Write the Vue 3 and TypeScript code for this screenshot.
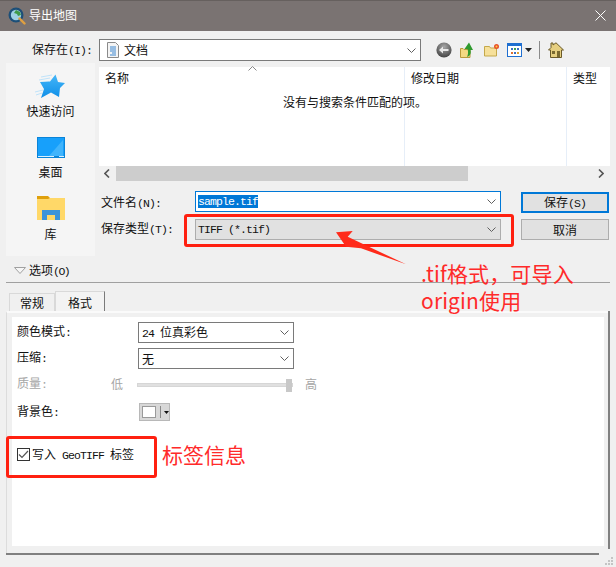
<script setup lang="ts">
const columns: { label: string; width: number }[] = [
  { label: '名称', width: 306 },
  { label: '修改日期', width: 162 },
  { label: '类型', width: 43 },
]
</script>

<template>
  <div class="dialog">
    <header class="titlebar">
      <svg class="app-icon" width="18" height="18" viewBox="0 0 18 18">
        <circle cx="8" cy="8" r="7.500" fill="#1d4f78" />
        <circle cx="8" cy="8" r="5.200" fill="#9fd0e4" />
        <path d="M8 3l4 2 1 3-3 1-1-2-3-1z" fill="#3f9a4a" />
        <path d="M11.500 11.500l5 5" stroke="#e0a040" stroke-width="2.400" stroke-linecap="round" />
      </svg>
      <span class="title">导出地图</span>
      <svg class="close" width="11" height="11" viewBox="0 0 11 11">
        <path d="M.5.5l10 10M10.500.5l-10 10" stroke="#fff" stroke-width="1" />
      </svg>
    </header>

    <div class="lookin">
      <label class="lookin-label">保存在<span class="m">(I):</span></label>
      <div class="combo lookin-combo">
        <svg width="12" height="16" viewBox="0 0 12 16">
          <path d="M.5.5h8l3 3v12H.5z" fill="#f4f4f4" stroke="#8a8a8a" />
          <path d="M3 5h6M3 7h6M3 9h6M5 11h4M3 13h6" stroke="#3a86d0" stroke-width="1" />
        </svg>
        <span>文档</span>
        <svg class="chev" width="9" height="5" viewBox="0 0 9 5"><path d="M.5.5l4 4 4-4" fill="none" stroke="#606060" /></svg>
      </div>
      <div class="toolbar">
        <svg width="16" height="16" viewBox="0 0 16 16">
          <defs>
            <radialGradient id="bk" cx="50%" cy="30%" r="75%"><stop offset="0" stop-color="#a8a8a8" /><stop offset="1" stop-color="#3c3c3c" /></radialGradient>
          </defs>
          <circle cx="8" cy="8" r="7.600" fill="url(#bk)" />
          <path d="M3 8l4-3.500V7h5.500v2H7v2.500z" fill="#e8e8e8" />
        </svg>
        <svg class="gap-up" width="14" height="16" viewBox="0 0 14 16">
          <path d="M.5 6.500h2.500l1 1h6v8h-9.500z" fill="#f3d982" stroke="#b89a3c" />
          <path d="M7 15c3-1 4.500-3.500 3.500-7H13L9 .5 4.500 7H7.500c1 3 .5 6-.5 8z" fill="#2f9a2e" />
        </svg>
        <svg class="gap-new" width="16" height="14" viewBox="0 0 16 14">
          <path d="M.5 3.500h5l1 1.500h6v8h-12z" fill="#f6e09a" stroke="#c4a84a" />
          <circle cx="12.500" cy="3.500" r="2.500" fill="#e8502a" />
          <circle cx="12.500" cy="3.500" r="1" fill="#fbd04a" />
        </svg>
        <svg class="gap-view" width="15" height="14" viewBox="0 0 15 14">
          <rect x=".5" y=".5" width="14" height="13" fill="#fff" stroke="#1f6fd0" />
          <rect x="1" y="1" width="13" height="2" fill="#1f6fd0" />
          <path d="M4 5h2v2H4z" fill="#3a6fc0" /><path d="M7 5h2v2H7z" fill="#3aa050" /><path d="M10 5h2v2h-2z" fill="#3a6fc0" />
          <path d="M4 9h2v2H4z" fill="#e07030" /><path d="M7 9h2v2H7z" fill="#3a6fc0" /><path d="M10 9h2v2h-2z" fill="#e0a030" />
        </svg>
        <svg class="gap-caret" width="7" height="4" viewBox="0 0 7 4"><path d="M0 0h7L3.500 4z" fill="#222" /></svg>
        <i class="tool-sep"></i>
        <svg class="gap-home" width="16" height="16" viewBox="0 0 16 16">
          <path d="M3 1h2v2L8 .8 15.500 8H13.500v7.500h-11V8H.5L3 5.500z" fill="#e6cf80" stroke="#6a5a28" />
          <rect x="4" y="9" width="3" height="3" fill="#7a6a30" /><rect x="9" y="9" width="3" height="6" fill="#7a6a30" />
        </svg>
      </div>
    </div>

    <div class="main">
      <aside class="places">
        <div class="place place-star">
          <svg width="30" height="26" viewBox="0 0 30 26">
            <defs><linearGradient id="st" x1="0" y1="0" x2="0" y2="1"><stop offset="0" stop-color="#45b6f8" /><stop offset="1" stop-color="#0f8fe8" /></linearGradient></defs>
            <path d="M6 4L17 2M4 7l11-2M6 10l8-1M0 19l8-2M1 22l6-2" stroke="#bfe3fa" stroke-width="1" />
            <path d="M20.500 1.500L23 9l7 1-5 5-1 9-8-4.500L6 25l3-9-4-7 10-.5z" fill="url(#st)" />
          </svg>
          <span>快速访问</span>
        </div>
        <div class="place place-desk">
          <svg width="28" height="21" viewBox="0 0 28 21">
            <rect width="28" height="21" fill="#0a84d8" />
            <rect x="1" y="1" width="26" height="18" fill="#17a0fb" />
            <path d="M12 19L26 3v16z" fill="#40b4fc" />
            <path d="M1 19.500h16M22 19.500h5" stroke="#d8f0ff" stroke-width="1" />
          </svg>
          <span>桌面</span>
        </div>
        <div class="place place-lib">
          <svg width="28" height="24" viewBox="0 0 28 24">
            <path d="M0 0h11l2 2v3H0z" fill="#dfa00c" />
            <path d="M0 3h11l2-1h15v22H0z" fill="#ffd868" />
            <path d="M5 24v-10h18v10h-5v-5h-8v5z" fill="#3c94d8" />
          </svg>
          <span>库</span>
        </div>
      </aside>

      <div class="file-pane">
        <div class="list">
          <div class="list-head">
            <div v-for="c in columns" :key="c.label" class="col" :style="{ width: c.width + 'px' }">{{ c.label }}</div>
          </div>
          <svg class="sort" width="9" height="5" viewBox="0 0 9 5"><path d="M.5 4.500l4-4 4 4" fill="none" stroke="#888" /></svg>
          <div class="empty">没有与搜索条件匹配的项。</div>
        </div>
        <div class="hscroll">
          <svg class="arrow" width="6" height="9" viewBox="0 0 6 9"><path d="M5 .5l-4 4 4 4" fill="none" stroke="#555" stroke-width="1.600" /></svg>
          <div class="thumb"></div>
          <svg class="arrow" width="6" height="9" viewBox="0 0 6 9"><path d="M1 .5l4 4-4 4" fill="none" stroke="#555" stroke-width="1.600" /></svg>
        </div>
        <div class="fields">
          <div class="field-labels">
            <label>文件名<span class="m">(N):</span></label>
            <label>保存类型<span class="m">(T):</span></label>
          </div>
          <div class="field-inputs">
            <div class="combo input-active">
              <span class="m selected">sample.tif</span>
              <svg class="chev" width="9" height="5" viewBox="0 0 9 5"><path d="M.5.5l4 4 4-4" fill="none" stroke="#606060" /></svg>
            </div>
            <div class="combo input-gray">
              <span class="m">TIFF (*.tif)</span>
              <svg class="chev" width="9" height="5" viewBox="0 0 9 5"><path d="M.5.5l4 4 4-4" fill="none" stroke="#606060" /></svg>
            </div>
          </div>
          <div class="field-buttons">
            <button class="btn btn-default">保存<span class="m">(S)</span></button>
            <button class="btn">取消</button>
          </div>
        </div>
      </div>
    </div>

    <div class="options">
      <svg width="12" height="7" viewBox="0 0 12 7"><path d="M.5.5h11L6 6.500z" fill="#f6f6f6" stroke="#a0a0a0" /></svg>
      <span>选项<span class="m tight">(O)</span></span>
    </div>

    <div class="tabs">
      <div class="tab">常规</div>
      <div class="tab tab-active">格式</div>
    </div>

    <section class="panel">
      <div class="panel-inner">
        <div class="form-row">
          <label class="form-label">颜色模式<span class="m">:</span></label>
          <div class="combo small"><span><span class="m">24 </span>位真彩色</span>
            <svg class="chev" width="9" height="5" viewBox="0 0 9 5"><path d="M.5.5l4 4 4-4" fill="none" stroke="#606060" /></svg>
          </div>
        </div>
        <div class="form-row">
          <label class="form-label">压缩<span class="m">:</span></label>
          <div class="combo small"><span>无</span>
            <svg class="chev" width="9" height="5" viewBox="0 0 9 5"><path d="M.5.5l4 4 4-4" fill="none" stroke="#606060" /></svg>
          </div>
        </div>
        <div class="form-row quality">
          <label class="form-label">质量<span class="m">:</span></label>
          <span class="low">低</span>
          <div class="slider"><i class="slider-thumb"></i></div>
          <span class="high">高</span>
        </div>
        <div class="form-row bg-row">
          <label class="form-label">背景色<span class="m">:</span></label>
          <div class="color-btn">
            <i class="swatch"></i><i class="color-sep"></i>
            <svg width="5" height="3" viewBox="0 0 5 3"><path d="M0 0h5L2.500 3z" fill="#111" /></svg>
          </div>
        </div>
        <div class="check-row">
          <div class="check-box">
            <span class="checkbox">
              <svg width="11" height="9" viewBox="0 0 11 9"><path d="M1 4.500l3 3 6-6.500" fill="none" stroke="#555" stroke-width="1.200" /></svg>
            </span>
            <span>写入<span class="m"> GeoTIFF </span>标签</span>
          </div>
          <span class="note note-tag">标签信息</span>
        </div>
      </div>
    </section>

    <!-- annotations and window chrome drawn over the dialog -->
    <i class="mark mark-type"></i>
    <svg class="mark-arrow" width="80" height="40" viewBox="0 0 80 40">
      <path d="M0 2.300L16.700 1 11.700 6.700 70 34.300 25 18.300 10 16.700z" fill="#ff2a1a" />
    </svg>
    <div class="note note-tif">.tif格式，可导入<br />origin使用</div>
    <svg class="grip" width="8" height="8" viewBox="0 0 8 8">
      <path d="M6 0h2v2H6zM3 3h2v2H3zM6 3h2v2H6zM0 6h2v2H0zM3 6h2v2H3zM6 6h2v2H6z" fill="#c4c4c4" />
    </svg>
  </div>
</template>

<style>
html, body { margin: 0; padding: 0; }
</style>

<style scoped>
.dialog {
  position: relative;
  width: 616px;
  height: 567px;
  overflow: hidden;
  background: #f0f0f0;
  display: flex;
  flex-direction: column;
  font: 12px/16px "Noto Sans CJK SC", sans-serif;
  color: #111;
}
.m {
  font-family: "Liberation Mono", monospace;
  font-size: 11.5px;
  letter-spacing: -0.9px;
}
.tight { letter-spacing: -1.5px; }
.titlebar {
  height: 31px;
  flex: none;
  box-sizing: border-box;
  border-top: 1px solid #66605e;
  background: #7a7372;
  display: flex;
  align-items: center;
  padding: 0 10px 0 8px;
  color: #fff;
}
.app-icon { margin-top: -1px; }
.title { margin-left: 3px; margin-top: -3px; font-size: 12px; }
.close { margin-left: auto; margin-top: -2px; margin-right: 0; }

.lookin {
  display: flex;
  align-items: center;
  height: 22px;
  margin-top: 8px;
  flex: none;
}
.lookin-label { width: 99px; text-align: right; padding-right: 7px; box-sizing: border-box; margin-top: -1px; }
.combo {
  box-sizing: border-box;
  display: flex;
  align-items: center;
  background: #fff;
  border: 1px solid #7a7a7a;
  height: 22px;
  padding-left: 2px;
}
.chev { margin-left: auto; margin-right: 4px; flex: none; }
.lookin-combo { width: 322px; padding-left: 7px; gap: 5px; font-size: 12px; }
.toolbar { display: flex; align-items: center; margin-left: 15px; }
.gap-up { margin-left: 8px; }
.gap-new { margin-left: 10px; }
.gap-view { margin-left: 7px; }
.gap-caret { margin-left: 3px; }
.tool-sep { width: 1px; height: 18px; background: #8a8a8a; margin-left: 7px; }
.gap-home { margin-left: 8px; }

.main { display: flex; align-items: flex-start; flex: none; margin-top: 2px; padding-left: 6px; }
.places {
  width: 89px;
  height: 193px;
  background: #f5f5f5;
  display: flex;
  flex-direction: column;
  align-items: center;
  flex: none;
}
.place { display: flex; flex-direction: column; align-items: center; }
.place-star { margin-top: 10px; gap: 4px; }
.place-desk { margin-top: 18px; gap: 6px; }
.place-lib { margin-top: 16px; gap: 6px; }
.file-pane { margin-left: 4px; width: 511px; padding-top: 4px; }
.list { position: relative; height: 99px; background: #fff; }
.list-head { display: flex; height: 99px; }
.col {
  box-sizing: border-box;
  padding: 3px 0 0 6px;
  border-right: 1px solid #e6eef8;
}
.col:last-child { border-right: none; }
.sort { position: absolute; left: 149px; top: -1px; }
.empty { position: absolute; left: 184px; top: 27px; }
.hscroll { height: 15px; display: flex; align-items: center; }
.arrow { flex: none; margin: 0 6px 0 5px; }
.thumb { height: 15px; width: 352px; background: #cdcdcd; margin-right: auto; }

.fields { display: flex; margin-top: 10px; }
.field-labels {
  width: 96px;
  display: flex;
  flex-direction: column;
  padding-left: 2px;
  box-sizing: border-box;
  gap: 10px;
  padding-top: 3px;
}
.field-labels label { height: 16px; }
.field-inputs { width: 306px; display: flex; flex-direction: column; gap: 7px; }
.input-active { border-color: #0078d7; height: 21px; }
.input-gray { background: #e1e1e1; border-color: #adadad; height: 21px; }
.selected { background: #0078d7; color: #fff; height: 13px; line-height: 13px; }
.field-buttons { margin-left: 20px; display: flex; flex-direction: column; gap: 6px; padding-top: 1px; }
.btn {
  box-sizing: border-box;
  width: 88px;
  height: 21px;
  padding: 0;
  background: #e1e1e1;
  border: 1px solid #adadad;
  font: inherit;
  color: #111;
}
.btn-default { border: 2px solid #0078d7; }

.options {
  box-sizing: border-box;
  flex: none;
  margin: 6px 6px 0;
  height: 21px;
  border-bottom: 1px solid #a0a0a0;
  display: flex;
  align-items: flex-start;
  gap: 3px;
  padding-left: 8px;
}
.options svg { margin-top: 5px; }

.tabs { display: flex; align-items: flex-end; height: 20px; margin-top: 8px; padding-left: 9px; flex: none; }
.tab {
  box-sizing: border-box;
  width: 46px;
  height: 18px;
  text-align: center;
  border: 1px solid #d9d9d9;
  border-bottom: none;
  line-height: 18px;
  background: #f0f0f0;
}
.tab-active {
  width: 50px;
  height: 20px;
  line-height: 22px;
  background: #f3f3f3;
  border-right: 1px solid #7a7a7a;
}
.panel {
  position: relative;
  box-sizing: border-box;
  flex: none;
  width: 604px;
  height: 244px;
  margin-left: 6px;
  background: #f0f0f0;
  border-top: 2px solid #fafafa;
  border-left: 1px solid #dcdcdc;
  padding: 4px 6px 9px 5px;
}
.panel::before {
  content: "";
  position: absolute;
  right: 0;
  top: -2px;
  width: 2px;
  height: 238px;
  background: #808080;
}
.panel::after {
  content: "";
  position: absolute;
  left: -1px;
  bottom: 0;
  width: 593px;
  height: 2px;
  background: #808080;
}
.panel-inner { background: #fff; height: 100%; padding: 5px 0 0 5px; box-sizing: border-box; }
.form-row { display: flex; align-items: center; height: 21px; margin-bottom: 5px; }
.form-label { width: 121px; flex: none; margin-top: -2px; }
.small { width: 156px; height: 21px; padding-left: 3px; }
.quality { color: #a6a6a6; height: 13px; margin-top: 9px; margin-bottom: 0; }
.quality .form-label { width: 94px; }
.low { width: 26px; margin-top: -2px; }
.slider { width: 156px; height: 4px; background: #e0e0e0; border: 1px solid #d6d6d6; box-sizing: border-box; position: relative; }
.slider-thumb { position: absolute; right: 0; top: -5px; width: 6px; height: 13px; background: #c8c8c8; }
.high { margin-left: 12px; margin-top: -2px; }
.bg-row { margin-top: 12px; height: 18px; margin-bottom: 0; }
.bg-row .form-label { margin-top: 0; }
.color-btn {
  box-sizing: border-box;
  width: 31px;
  height: 18px;
  background: #d8d8d8;
  border: 1px solid #b8b8b8;
  margin-left: 1px;
  display: flex;
  align-items: center;
  padding-left: 2px;
}
.swatch { width: 14px; height: 12px; background: #fff; border: 1px solid #9a9a9a; box-sizing: border-box; }
.color-sep { width: 1px; height: 12px; background: #888; margin: 0 3px 0 4px; }
.check-row { display: flex; align-items: center; margin-left: -5px; margin-top: 15px; }
.check-box {
  box-sizing: border-box;
  flex: none;
  width: 151px;
  height: 42px;
  border: 3px solid #ff2010;
  border-radius: 3px;
  margin-left: -6px;
  display: flex;
  align-items: center;
  gap: 2px;
  padding: 0 0 5px 8px;
  white-space: pre;
}
.checkbox {
  box-sizing: border-box;
  width: 13px;
  height: 13px;
  border: 1px solid #333;
  background: #fff;
  display: flex;
  align-items: center;
  justify-content: center;
}
.note { color: #ff2a2a; font-size: 21px; line-height: 27px; }
.note-tag { margin-left: 5px; margin-top: -5px; }
.mark {
  position: absolute;
  box-sizing: border-box;
  border: 3px solid #ff2010;
  border-radius: 3px;
}
.mark-type { left: 184px; top: 214px; width: 330px; height: 33px; }
.mark-arrow { position: absolute; left: 336px; top: 230px; }
.note-tif { position: absolute; left: 421px; top: 260px; white-space: nowrap; font-size: 21px; letter-spacing: 0.15px; }
.grip { position: absolute; left: 605px; top: 557px; }
</style>
